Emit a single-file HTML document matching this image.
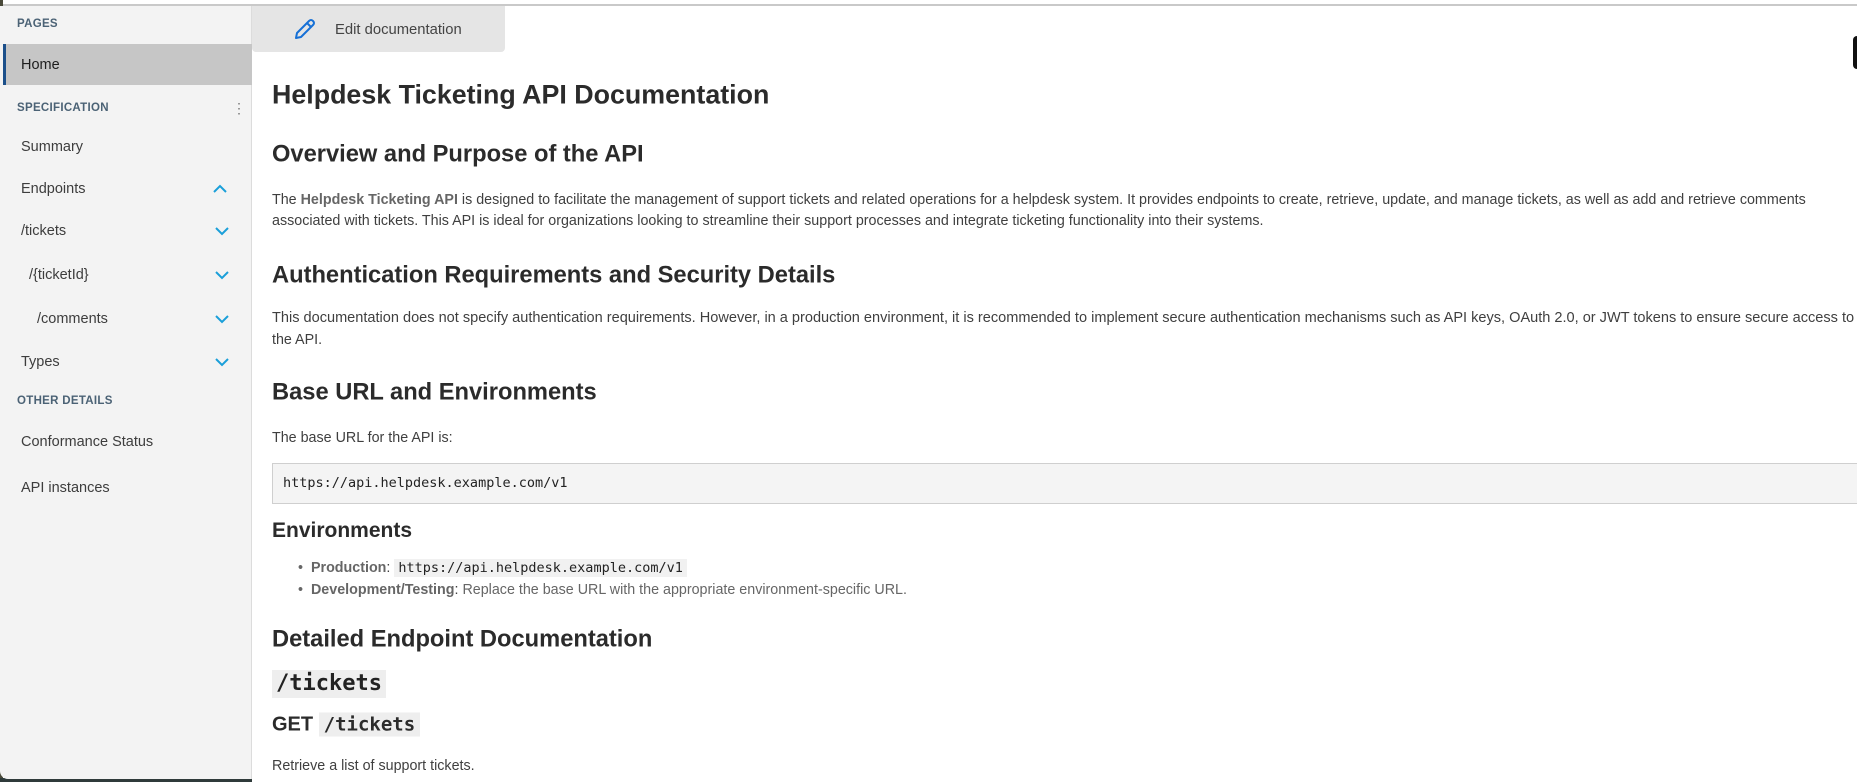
<!DOCTYPE html>
<html><head><meta charset="utf-8"><style>
*{margin:0;padding:0;box-sizing:border-box}
body{width:1857px;height:782px;overflow:hidden;background:#fff;font-family:"Liberation Sans",Arial,sans-serif;position:relative}
.a{position:absolute;white-space:nowrap}
.side{position:absolute;left:0;top:6px;width:252px;height:773px;background:#f3f3f3;border-right:1px solid #dcdcdc;border-bottom-left-radius:8px}
.lbl{position:absolute;left:17px;font-size:11.5px;font-weight:bold;color:#4b6275;letter-spacing:.3px;transform:translateY(-50%)}
.it{position:absolute;font-size:14.5px;color:#3d3d3d;transform:translateY(-50%)}
.chev{position:absolute;left:212px;width:16px;height:10px;transform:translateY(-50%)}
.h2{font-size:23.7px;font-weight:bold;color:#2b2b2b;transform:translateY(-50%)}
.p{font-size:14.3px;color:#3f3f3f;transform:translateY(-50%)}
.p b{color:#666}
.mono{font-family:"DejaVu Sans Mono","Liberation Mono",monospace}
</style></head><body>
<div class="a" style="left:0;top:0;width:1857px;height:4px;background:#fff"></div>
<div class="a" style="left:0;top:4px;width:1857px;height:2px;background:#c9c9c9"></div>
<div class="a" style="left:0;top:0;width:3px;height:782px;background:#4a4a3a"></div>
<div class="a" style="left:0;top:778px;width:252px;height:4px;background:#2f3a3a"></div>
<div class="side"></div>
<div class="lbl" style="top:24px">PAGES</div>
<div class="a" style="left:3px;top:44px;width:249px;height:41px;background:#c6c6c6"></div>
<div class="a" style="left:3px;top:44px;width:3px;height:41px;background:#1b4f8a"></div>
<div class="it" style="left:21px;top:65px;color:#1e1e1e">Home</div>
<div class="lbl" style="top:108px">SPECIFICATION</div>
<div class="a" style="left:232px;top:101px;font-size:14px;color:#777;line-height:14px">⋮</div>
<div class="it" style="left:21px;top:147px">Summary</div>
<div class="it" style="left:21px;top:189px">Endpoints</div>
<div class="it" style="left:21px;top:231px">/tickets</div>
<div class="it" style="left:29px;top:275px">/{ticketId}</div>
<div class="it" style="left:37px;top:319px">/comments</div>
<div class="it" style="left:21px;top:362px">Types</div>
<svg class="chev" style="top:189px" viewBox="0 0 16 10"><path d="M2 8 L8 2 L14 8" fill="none" stroke="#1a9fd9" stroke-width="2"/></svg>
<svg class="chev" style="top:231px;left:214px" viewBox="0 0 16 10"><path d="M2 2 L8 8 L14 2" fill="none" stroke="#1a9fd9" stroke-width="2"/></svg>
<svg class="chev" style="top:275px;left:214px" viewBox="0 0 16 10"><path d="M2 2 L8 8 L14 2" fill="none" stroke="#1a9fd9" stroke-width="2"/></svg>
<svg class="chev" style="top:319px;left:214px" viewBox="0 0 16 10"><path d="M2 2 L8 8 L14 2" fill="none" stroke="#1a9fd9" stroke-width="2"/></svg>
<svg class="chev" style="top:362px;left:214px" viewBox="0 0 16 10"><path d="M2 2 L8 8 L14 2" fill="none" stroke="#1a9fd9" stroke-width="2"/></svg>
<div class="lbl" style="top:401px">OTHER DETAILS</div>
<div class="it" style="left:21px;top:442px">Conformance Status</div>
<div class="it" style="left:21px;top:488px">API instances</div>

<div class="a" style="left:252px;top:6px;width:253px;height:46px;background:#e5e5e5;border-radius:0 0 4px 4px"></div>
<svg class="a" style="left:293px;top:17px" width="24" height="24" viewBox="0 0 24 24"><path d="M3 21 L4 16 L16 4 Q18 2 20 4 Q22 6 20 8 L8 20 Z M14 6 L18 10" fill="none" stroke="#1670d6" stroke-width="2" stroke-linejoin="round"/></svg>
<div class="a" style="left:335px;top:22px;font-size:14.8px;color:#444">Edit documentation</div>

<div class="a" style="left:1853px;top:36px;width:8px;height:33px;background:#111;border-radius:4px"></div>

<div class="a h2" style="left:272px;top:95px;font-size:26.8px">Helpdesk Ticketing API Documentation</div>
<div class="a h2" style="left:272px;top:155px">Overview and Purpose of the API</div>
<div class="a p" style="left:272px;top:200px">The <b>Helpdesk Ticketing API</b> is designed to facilitate the management of support tickets and related operations for a helpdesk system. It provides endpoints to create, retrieve, update, and manage tickets, as well as add and retrieve comments</div>
<div class="a p" style="left:272px;top:221px">associated with tickets. This API is ideal for organizations looking to streamline their support processes and integrate ticketing functionality into their systems.</div>
<div class="a h2" style="left:272px;top:276px">Authentication Requirements and Security Details</div>
<div class="a p" style="left:272px;top:318px;font-size:14.55px">This documentation does not specify authentication requirements. However, in a production environment, it is recommended to implement secure authentication mechanisms such as API keys, OAuth 2.0, or JWT tokens to ensure secure access to</div>
<div class="a p" style="left:272px;top:340px">the API.</div>
<div class="a h2" style="left:272px;top:393px">Base URL and Environments</div>
<div class="a p" style="left:272px;top:438px">The base URL for the API is:</div>
<div class="a" style="left:272px;top:463px;width:1600px;height:41px;background:#f4f4f4;border:1px solid #cfcfcf"></div>
<div class="a mono" style="left:283px;top:475px;font-size:13.5px;color:#222">https://api.helpdesk.example.com/v1</div>
<div class="a h2" style="left:272px;top:531px;font-size:21px">Environments</div>
<div class="a p" style="left:298px;top:568px"><span style="color:#666">•</span>&nbsp; <b>Production</b>: <span class="mono" style="background:#f1f1f1;color:#222;padding:1px 4px;font-size:13.5px">https://api.helpdesk.example.com/v1</span></div>
<div class="a p" style="left:298px;top:590px"><span style="color:#666">•</span>&nbsp; <b>Development/Testing</b>: <span style="color:#666">Replace the base URL with the appropriate environment-specific URL.</span></div>
<div class="a h2" style="left:272px;top:640px">Detailed Endpoint Documentation</div>
<div class="a mono" style="left:272px;top:670px;height:28px;padding:0 4px;background:#eee;font-size:22px;font-weight:bold;color:#222;line-height:28px">/tickets</div>
<div class="a h2" style="left:272px;top:725px;font-size:20px">GET <span class="mono" style="background:#eee;padding:1px 5px;font-size:19px">/tickets</span></div>
<div class="a p" style="left:272px;top:766px">Retrieve a list of support tickets.</div>
</body></html>
